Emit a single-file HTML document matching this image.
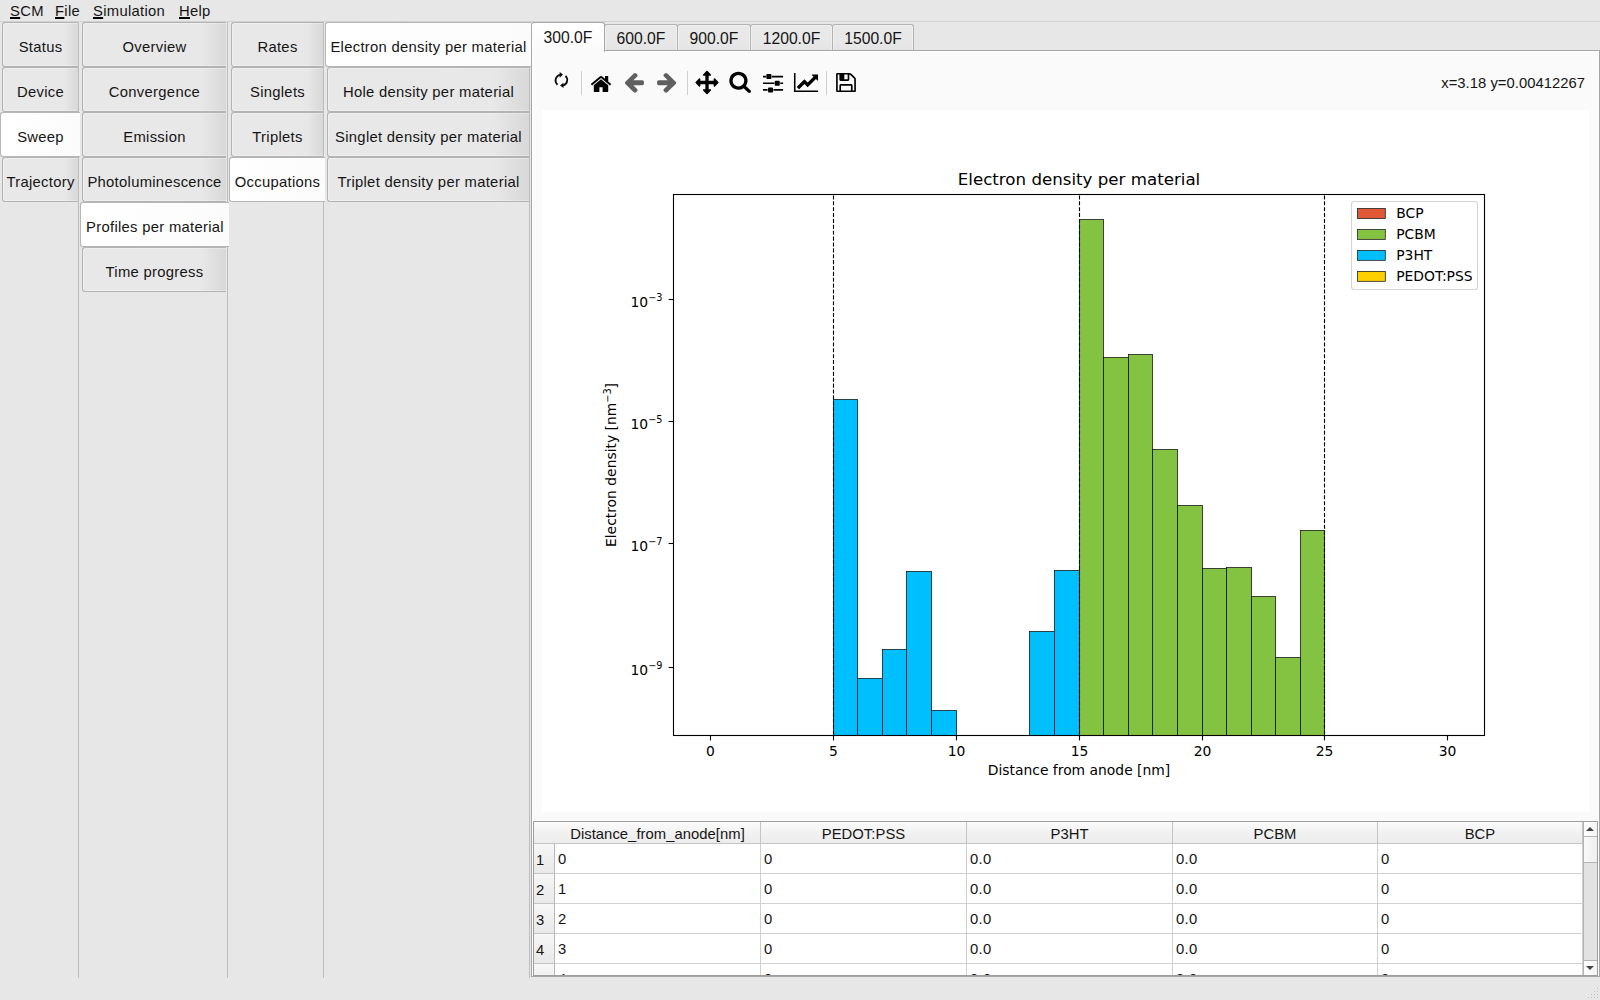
<!DOCTYPE html><html><head><meta charset="utf-8"><title>SCM</title><style>
*{box-sizing:border-box;margin:0;padding:0}
html,body{width:1600px;height:1000px;overflow:hidden;background:#e7e7e7}
body{position:relative;font-family:"Liberation Sans", sans-serif;font-size:14.8px;color:#151515;letter-spacing:0.3px}
.abs{position:absolute}
.menu{position:absolute;top:0;left:0;width:1600px;height:22px;border-bottom:1px solid #d2d2d2}
.menu span{position:absolute;top:1px;line-height:20px;white-space:nowrap}
.menu u{text-decoration:underline;text-decoration-thickness:1.7px;text-underline-offset:1.3px;text-decoration-color:#000}
.pl{position:absolute;top:22px;width:1px;height:956px;background:#bdbdbd}
.t{position:absolute;height:45px;border:1px solid #b3b3b3;border-right:none;border-radius:3px 0 0 3px;
   background:linear-gradient(to right,#e8e8e8 0%,#e8e8e8 82%,#d8d8d8 100%);
   box-shadow:inset 1px 1px 0 rgba(255,255,255,.3), inset 0 -1px 0 rgba(255,255,255,.3);
   text-align:center;line-height:43px;white-space:nowrap;padding-top:3px}
.t.s{background:linear-gradient(to right,#ffffff 0%,#fbfbfb 100%);border-color:#b6b6b6;box-shadow:none;z-index:2}
.h{position:absolute;top:24px;height:26px;border:1px solid #b3b3b3;border-bottom:none;border-radius:3px 3px 0 0;
   background:linear-gradient(to bottom,#e9e9e9 0%,#e8e8e8 70%,#e3e3e3 100%);
   box-shadow:inset 1px 1px 0 rgba(255,255,255,.38), inset -1px 0 0 rgba(255,255,255,.38);
   text-align:center;line-height:25px;white-space:nowrap;padding-top:1px;font-size:15.7px;letter-spacing:0}
.h.s{top:22px;height:30px;background:linear-gradient(to bottom,#ffffff 0%,#fafafa 100%);border-color:#a8a8a8;box-shadow:none;z-index:2;padding-top:2px}
.pane{position:absolute;left:531px;top:50px;width:1069px;height:927px;border:1px solid #a6a6a6;background:#fafafa;box-shadow:inset 1px 1px 0 #fff, inset -1px -1px 0 #fff}
.canvas{position:absolute;left:542px;top:110px;width:1047px;height:702px;background:#fff}
.gd{position:absolute;width:1px;height:1px;background:#bcbcbc}
.sep{position:absolute;top:71px;width:1px;height:24px;background:#cfcfcf}
.coord{position:absolute;right:15px;top:73px;line-height:20px;white-space:nowrap;letter-spacing:0.03px}
.tbl{position:absolute;left:533px;top:821px;width:1065px;height:155px;border:1px solid #9e9e9e;background:#fff;overflow:hidden}
.hd{position:absolute;top:0;height:22px;background:linear-gradient(to bottom,#fbfbfb 0%,#f2f2f2 50%,#ececec 100%);border-right:1px solid #c4c4c4;border-bottom:1px solid #c4c4c4;text-align:center;line-height:24px;white-space:nowrap;letter-spacing:0.05px}
.rh{position:absolute;left:0;width:21px;height:30px;background:linear-gradient(to bottom,#f7f7f7 0%,#efefef 50%,#e9e9e9 100%);border-right:1px solid #b8b8b8;border-bottom:1px solid #c4c4c4;line-height:33px;padding-left:2px;white-space:nowrap;letter-spacing:0}
.c{position:absolute;height:30px;border-right:1px solid #d0d0d0;border-bottom:1px solid #d0d0d0;line-height:31px;padding-left:3px;white-space:nowrap}

.sb{position:absolute;left:1049px;top:0;width:15px;height:153px;border-left:1px solid #b4b4b4;background:#e2e2e2}
.sbu,.sbd{position:absolute;left:0;width:14px;height:15px;background:linear-gradient(to right,#fff,#f2f2f2)}
.sbu{top:0;border-bottom:1px solid #b4b4b4}
.sbd{bottom:0;border-top:1px solid #b4b4b4}
.sbu:after,.sbd:after{content:"";position:absolute;left:2px;border-left:4px solid transparent;border-right:4px solid transparent}
.sbu:after{top:5px;border-bottom:4px solid #444}
.sbd:after{top:5px;border-top:4px solid #444}
.sbt{position:absolute;left:0;top:15px;width:14px;height:26px;background:linear-gradient(to right,#fafafa,#ededed);border-bottom:1px solid #b4b4b4}
</style></head><body>
<div class="menu">
<span style="left:10px"><u>S</u>CM</span>
<span style="left:55px"><u>F</u>ile</span>
<span style="left:93px"><u>S</u>imulation</span>
<span style="left:179px"><u>H</u>elp</span>
</div>
<div class="pl" style="left:78px"></div>
<div class="t" style="left:2px;top:22px;width:76px">Status</div>
<div class="t" style="left:2px;top:67px;width:76px">Device</div>
<div class="t s" style="left:0px;top:112px;width:80px">Sweep</div>
<div class="t" style="left:2px;top:157px;width:76px">Trajectory</div>
<div class="pl" style="left:227px"></div>
<div class="t" style="left:82px;top:22px;width:144px">Overview</div>
<div class="t" style="left:82px;top:67px;width:144px">Convergence</div>
<div class="t" style="left:82px;top:112px;width:144px">Emission</div>
<div class="t" style="left:82px;top:157px;width:144px">Photoluminescence</div>
<div class="t s" style="left:80px;top:202px;width:149px">Profiles per material</div>
<div class="t" style="left:82px;top:247px;width:144px">Time progress</div>
<div class="pl" style="left:323px"></div>
<div class="t" style="left:231px;top:22px;width:92px">Rates</div>
<div class="t" style="left:231px;top:67px;width:92px">Singlets</div>
<div class="t" style="left:231px;top:112px;width:92px">Triplets</div>
<div class="t s" style="left:229px;top:157px;width:96px">Occupations</div>
<div class="pl" style="left:529px"></div>
<div class="t s" style="left:325px;top:22px;width:206px">Electron density per material</div>
<div class="t" style="left:327px;top:67px;width:202px">Hole density per material</div>
<div class="t" style="left:327px;top:112px;width:202px">Singlet density per material</div>
<div class="t" style="left:327px;top:157px;width:202px">Triplet density per material</div>
<div class="pane"></div>
<div class="h s" style="left:531px;width:74px">300.0F</div>
<div class="h" style="left:604px;width:74px">600.0F</div>
<div class="h" style="left:677px;width:74px">900.0F</div>
<div class="h" style="left:750px;width:83px">1200.0F</div>
<div class="h" style="left:832px;width:82px">1500.0F</div>
<svg class="abs" style="left:540px;top:60px" width="340" height="44" viewBox="0 0 340 44">
<g><path transform="translate(49.774,12.705) scale(0.01253,0.01263)" fill="#000" d="M1472 992v480q0 26-19 45t-45 19h-384v-384h-256v384h-384q-26 0-45-19t-19-45v-480q0-1 .5-3t.5-3l575-474 575 474q1 2 1 6zm223-69l-62 74q-8 9-21 11h-3q-13 0-21-7l-692-577-692 577q-12 8-24 7-13-2-21-11l-62-74q-8-10-7-23.500t11-21.500l719-599q32-26 76-26t76 26l244 204v-195q0-14 9-23t23-9h192q14 0 23 9t9 23v408l219 182q10 8 11 21.500t-7 23.500z"/></g>
<g><path transform="translate(84.074,10.600) scale(0.01291,0.01271)" fill="#5f5f5f" d="M1536 896v128q0 53-32.500 90.500t-84.500 37.500h-704l293 294q38 36 38 90t-38 90l-75 76q-37 37-90 37-52 0-91-37l-651-652q-37-37-37-90 0-52 37-91l651-650q38-38 91-38 52 0 90 38l75 74q38 38 38 91t-38 91l-293 293h704q52 0 84.500 37.500t32.500 90.500z"/></g>
<g><path transform="translate(117.100,10.600) scale(0.01298,0.01271)" fill="#5f5f5f" d="M1472 960q0 54-37 91l-651 651q-39 37-91 37-51 0-90-37l-75-75q-38-38-38-91t38-91l293-293h-704q-52 0-84.500-37.500t-32.500-90.500v-128q0-53 32.500-90.500t84.500-37.500h704l-293-294q-38-36-38-90t38-90l75-75q38-38 90-38 53 0 91 38l651 651q37 35 37 90z"/></g>
<g><path transform="translate(155.400,10.800) scale(0.01295,0.01306)" fill="#000" d="M1792 896q0 26-19 45l-256 256q-19 19-45 19t-45-19-19-45v-128h-384v384h128q26 0 45 19t19 45-19 45l-256 256q-19 19-45 19t-45-19l-256-256q-19-19-19-45t19-45 45-19h128v-384h-384v128q0 26-19 45t-45 19-45-19l-256-256q-19-19-19-45t19-45l256-256q19-19 45-19t45 19 19 45v128h384v-384h-128q-26 0-45-19t-19-45 19-45l256-256q19-19 45-19t45 19l256 256q19 19 19 45t-19 45-45 19h-128v384h384v-128q0-26 19-45t45-19 45 19l256 256q19 19 19 45z"/></g>
<g><path transform="translate(188.469,10.054) scale(0.01298,0.01286)" fill="#000" d="M1216 832q0-185-131.500-316.500t-316.500-131.500-316.500 131.500-131.500 316.500 131.500 316.500 316.500 131.500 316.500-131.500 131.500-316.500zm512 832q0 52-38 90t-90 38q-54 0-90-38l-343-342q-179 124-399 124-143 0-273.500-55.500t-225-150-150-225-55.500-273.500 55.500-273.500 150-225 225-150 273.500-55.500 273.500 55.500 225 150 150 225 55.500 273.500q0 220-124 399l343 343q37 37 37 90z"/></g>
<g><path transform="translate(223.000,10.773) scale(0.01309,0.01300)" fill="#000" d="M352 1408v128h-352v-128h352zm352-128q26 0 45 19t19 45v256q0 26-19 45t-45 19h-256q-26 0-45-19t-19-45v-256q0-26 19-45t45-19h256zm160-384v128h-864v-128h864zm-640-512v128h-224v-128h224zm1312 1024v128h-736v-128h736zm-960-1152q26 0 45 19t19 45v256q0 26-19 45t-45 19h-256q-26 0-45-19t-19-45v-256q0-26 19-45t45-19h256zm640 512q26 0 45 19t19 45v256q0 26-19 45t-45 19h-256q-26 0-45-19t-19-45v-256q0-26 19-45t45-19h256zm320 128v128h-224v-128h224zm0-512v128h-864v-128h864z"/></g>
<g clip-path="url(#cc)"><path transform="translate(253.900,11.300) scale(0.01265,0.01250)" fill="#000" d="M2048 1536v128h-2048v-1536h128v1408h1920zm-128-1248v435q0 21-19.500 29.500t-35.500-7.500l-121-121-633 633q-10 10-23 10t-23-10l-233-233-416 416-192-192 585-585q10-10 23-10t23 10l233 233 464-464-121-121q-16-16-7.500-35.500t29.500-19.500h435q14 0 23 9t9 23z"/></g>
<g><path transform="translate(294.450,11.300) scale(0.01289,0.01250)" fill="#000" d="M512 1536h768v-384h-768v384zm896 0h128v-896q0-14-10-38.500t-20-34.500l-281-281q-10-10-34-20t-39-10v416q0 40-28 68t-68 28h-576q-40 0-68-28t-28-68v-416h-128v1280h128v-416q0-40 28-68t68-28h832q40 0 68 28t28 68v416zm-384-928v-320q0-13-9.500-22.500t-22.500-9.500h-192q-13 0-22.500 9.500t-9.500 22.500v320q0 13 9.500 22.500t22.500 9.500h192q13 0 22.500-9.500t9.500-22.500zm640 32v928q0 40-28 68t-68 28h-1344q-40 0-68-28t-28-68v-1344q0-40 28-68t68-28h928q40 0 88 20t76 48l280 280q28 28 48 76t20 88z"/></g>
<defs><clipPath id="cc"><rect x="253.5" y="0" width="24.6" height="44"/></clipPath></defs>
<path d="M17.50 24.70 A5.7 5.7 0 0 1 20.30 14.80" fill="none" stroke="#0a0a0a" stroke-width="1.8"/>
<path d="M19.70 12.10 L23.00 14.60 L19.70 17.70 Z" fill="#0a0a0a"/>
<path d="M25.50 15.90 A5.7 5.7 0 0 1 23.00 25.50" fill="none" stroke="#0a0a0a" stroke-width="1.8"/>
<path d="M23.50 22.70 L20.00 25.50 L23.50 28.00 Z" fill="#0a0a0a"/>
</svg>
<div class="sep" style="left:581px"></div>
<div class="sep" style="left:687px"></div>
<div class="sep" style="left:826px"></div>
<div class="coord">x=3.18 y=0.00412267</div>
<div class="canvas"><svg width="1047" height="702" viewBox="0 0 1047 702" style="position:absolute;left:0;top:0;font-family:'DejaVu Sans', sans-serif;letter-spacing:0" fill="#000">
<g stroke="#000" stroke-width="0.7">
<rect x="291.5" y="289.5" width="24.0" height="336.0" fill="#00bfff"/>
<rect x="315.5" y="568.5" width="25.0" height="57.0" fill="#00bfff"/>
<rect x="340.5" y="539.5" width="24.0" height="86.0" fill="#00bfff"/>
<rect x="364.5" y="461.5" width="25.0" height="164.0" fill="#00bfff"/>
<rect x="389.5" y="600.5" width="25.0" height="25.0" fill="#00bfff"/>
<rect x="487.5" y="521.5" width="25.0" height="104.0" fill="#00bfff"/>
<rect x="512.5" y="460.5" width="25.0" height="165.0" fill="#00bfff"/>
<rect x="537.5" y="109.5" width="24.0" height="516.0" fill="#84c341"/>
<rect x="561.5" y="247.5" width="25.0" height="378.0" fill="#84c341"/>
<rect x="586.5" y="244.5" width="24.0" height="381.0" fill="#84c341"/>
<rect x="610.5" y="339.5" width="25.0" height="286.0" fill="#84c341"/>
<rect x="635.5" y="395.5" width="25.0" height="230.0" fill="#84c341"/>
<rect x="660.5" y="458.5" width="24.0" height="167.0" fill="#84c341"/>
<rect x="684.5" y="457.5" width="25.0" height="168.0" fill="#84c341"/>
<rect x="709.5" y="486.5" width="24.0" height="139.0" fill="#84c341"/>
<rect x="733.5" y="547.5" width="25.0" height="78.0" fill="#84c341"/>
<rect x="758.5" y="420.5" width="24.0" height="205.0" fill="#84c341"/>
</g>
<line x1="291.5" y1="84.5" x2="291.5" y2="625.5" stroke="#000" stroke-width="1.11" stroke-dasharray="4.1 1.78" stroke-dashoffset="5"/>
<line x1="537.5" y1="84.5" x2="537.5" y2="625.5" stroke="#000" stroke-width="1.11" stroke-dasharray="4.1 1.78" stroke-dashoffset="5"/>
<line x1="782.5" y1="84.5" x2="782.5" y2="625.5" stroke="#000" stroke-width="1.11" stroke-dasharray="4.1 1.78" stroke-dashoffset="5"/>
<rect x="131.5" y="84.5" width="811.0" height="541.0" fill="none" stroke="#000" stroke-width="1.1"/>
<line x1="168.5" y1="625.5" x2="168.5" y2="630.4" stroke="#000" stroke-width="1.1"/>
<text x="168.5" y="646.1" font-size="13.89" text-anchor="middle">0</text>
<line x1="291.5" y1="625.5" x2="291.5" y2="630.4" stroke="#000" stroke-width="1.1"/>
<text x="291.5" y="646.1" font-size="13.89" text-anchor="middle">5</text>
<line x1="414.5" y1="625.5" x2="414.5" y2="630.4" stroke="#000" stroke-width="1.1"/>
<text x="414.5" y="646.1" font-size="13.89" text-anchor="middle">10</text>
<line x1="537.5" y1="625.5" x2="537.5" y2="630.4" stroke="#000" stroke-width="1.1"/>
<text x="537.5" y="646.1" font-size="13.89" text-anchor="middle">15</text>
<line x1="660.5" y1="625.5" x2="660.5" y2="630.4" stroke="#000" stroke-width="1.1"/>
<text x="660.5" y="646.1" font-size="13.89" text-anchor="middle">20</text>
<line x1="782.5" y1="625.5" x2="782.5" y2="630.4" stroke="#000" stroke-width="1.1"/>
<text x="782.5" y="646.1" font-size="13.89" text-anchor="middle">25</text>
<line x1="905.5" y1="625.5" x2="905.5" y2="630.4" stroke="#000" stroke-width="1.1"/>
<text x="905.5" y="646.1" font-size="13.89" text-anchor="middle">30</text>
<line x1="126.6" y1="189.5" x2="131.5" y2="189.5" stroke="#000" stroke-width="1.1"/>
<text x="120.5" y="196.7" font-size="13.89" text-anchor="end">10<tspan font-size="9.72" dy="-6.2">−3</tspan></text>
<line x1="126.6" y1="311.5" x2="131.5" y2="311.5" stroke="#000" stroke-width="1.1"/>
<text x="120.5" y="318.7" font-size="13.89" text-anchor="end">10<tspan font-size="9.72" dy="-6.2">−5</tspan></text>
<line x1="126.6" y1="433.5" x2="131.5" y2="433.5" stroke="#000" stroke-width="1.1"/>
<text x="120.5" y="440.7" font-size="13.89" text-anchor="end">10<tspan font-size="9.72" dy="-6.2">−7</tspan></text>
<line x1="126.6" y1="557.5" x2="131.5" y2="557.5" stroke="#000" stroke-width="1.1"/>
<text x="120.5" y="564.7" font-size="13.89" text-anchor="end">10<tspan font-size="9.72" dy="-6.2">−9</tspan></text>
<text x="537.0" y="75.1" font-size="16.67" text-anchor="middle">Electron density per material</text>
<text x="537.0" y="665.3" font-size="13.89" text-anchor="middle">Distance from anode [nm]</text>
<text transform="translate(74.2,355.0) rotate(-90)" font-size="13.89" text-anchor="middle">Electron density [nm<tspan font-size="9.72" dy="-5.5">−3</tspan><tspan dy="5.5">]</tspan></text>
<rect x="809.5" y="91.5" width="126.0" height="88.0" rx="2.8" fill="#fff" fill-opacity="0.8" stroke="#d4d4d4" stroke-width="1.1"/>
<rect x="815.5" y="98.50" width="27.8" height="9.9" fill="#e05836" stroke="#222" stroke-width="0.8"/>
<text x="854.2" y="107.80" font-size="13.89">BCP</text>
<rect x="815.5" y="119.47" width="27.8" height="9.9" fill="#84c341" stroke="#222" stroke-width="0.8"/>
<text x="854.2" y="128.77" font-size="13.89">PCBM</text>
<rect x="815.5" y="140.44" width="27.8" height="9.9" fill="#00bfff" stroke="#222" stroke-width="0.8"/>
<text x="854.2" y="149.74" font-size="13.89">P3HT</text>
<rect x="815.5" y="161.41" width="27.8" height="9.9" fill="#ffd000" stroke="#222" stroke-width="0.8"/>
<text x="854.2" y="170.71" font-size="13.89">PEDOT:PSS</text>
</svg></div>
<div class="tbl">
<div class="hd" style="left:0;width:21px;border-right:none"></div>
<div class="hd" style="left:21px;width:206px">Distance_from_anode[nm]</div>
<div class="hd" style="left:227px;width:206px">PEDOT:PSS</div>
<div class="hd" style="left:433px;width:206px">P3HT</div>
<div class="hd" style="left:639px;width:205px">PCBM</div>
<div class="hd" style="left:844px;width:205px">BCP</div>
<div class="rh" style="top:22px">1</div>
<div class="c" style="left:21px;top:22px;width:206px">0</div>
<div class="c" style="left:227px;top:22px;width:206px">0</div>
<div class="c" style="left:433px;top:22px;width:206px">0.0</div>
<div class="c" style="left:639px;top:22px;width:205px">0.0</div>
<div class="c" style="left:844px;top:22px;width:205px">0</div>
<div class="rh" style="top:52px">2</div>
<div class="c" style="left:21px;top:52px;width:206px">1</div>
<div class="c" style="left:227px;top:52px;width:206px">0</div>
<div class="c" style="left:433px;top:52px;width:206px">0.0</div>
<div class="c" style="left:639px;top:52px;width:205px">0.0</div>
<div class="c" style="left:844px;top:52px;width:205px">0</div>
<div class="rh" style="top:82px">3</div>
<div class="c" style="left:21px;top:82px;width:206px">2</div>
<div class="c" style="left:227px;top:82px;width:206px">0</div>
<div class="c" style="left:433px;top:82px;width:206px">0.0</div>
<div class="c" style="left:639px;top:82px;width:205px">0.0</div>
<div class="c" style="left:844px;top:82px;width:205px">0</div>
<div class="rh" style="top:112px">4</div>
<div class="c" style="left:21px;top:112px;width:206px">3</div>
<div class="c" style="left:227px;top:112px;width:206px">0</div>
<div class="c" style="left:433px;top:112px;width:206px">0.0</div>
<div class="c" style="left:639px;top:112px;width:205px">0.0</div>
<div class="c" style="left:844px;top:112px;width:205px">0</div>
<div class="rh" style="top:142px"></div>
<div class="c" style="left:21px;top:142px;width:206px">4</div>
<div class="c" style="left:227px;top:142px;width:206px">0</div>
<div class="c" style="left:433px;top:142px;width:206px">0.0</div>
<div class="c" style="left:639px;top:142px;width:205px">0.0</div>
<div class="c" style="left:844px;top:142px;width:205px">0</div>
<div class="sb"><div class="sbu"></div><div class="sbt"></div><div class="sbd"></div></div>
</div>
<i class="gd" style="left:1597px;top:988px"></i><i class="gd" style="left:1594px;top:991px"></i><i class="gd" style="left:1597px;top:991px"></i><i class="gd" style="left:1591px;top:994px"></i><i class="gd" style="left:1594px;top:994px"></i><i class="gd" style="left:1597px;top:994px"></i><i class="gd" style="left:1588px;top:997px"></i><i class="gd" style="left:1591px;top:997px"></i><i class="gd" style="left:1594px;top:997px"></i><i class="gd" style="left:1597px;top:997px"></i>
</body></html>
